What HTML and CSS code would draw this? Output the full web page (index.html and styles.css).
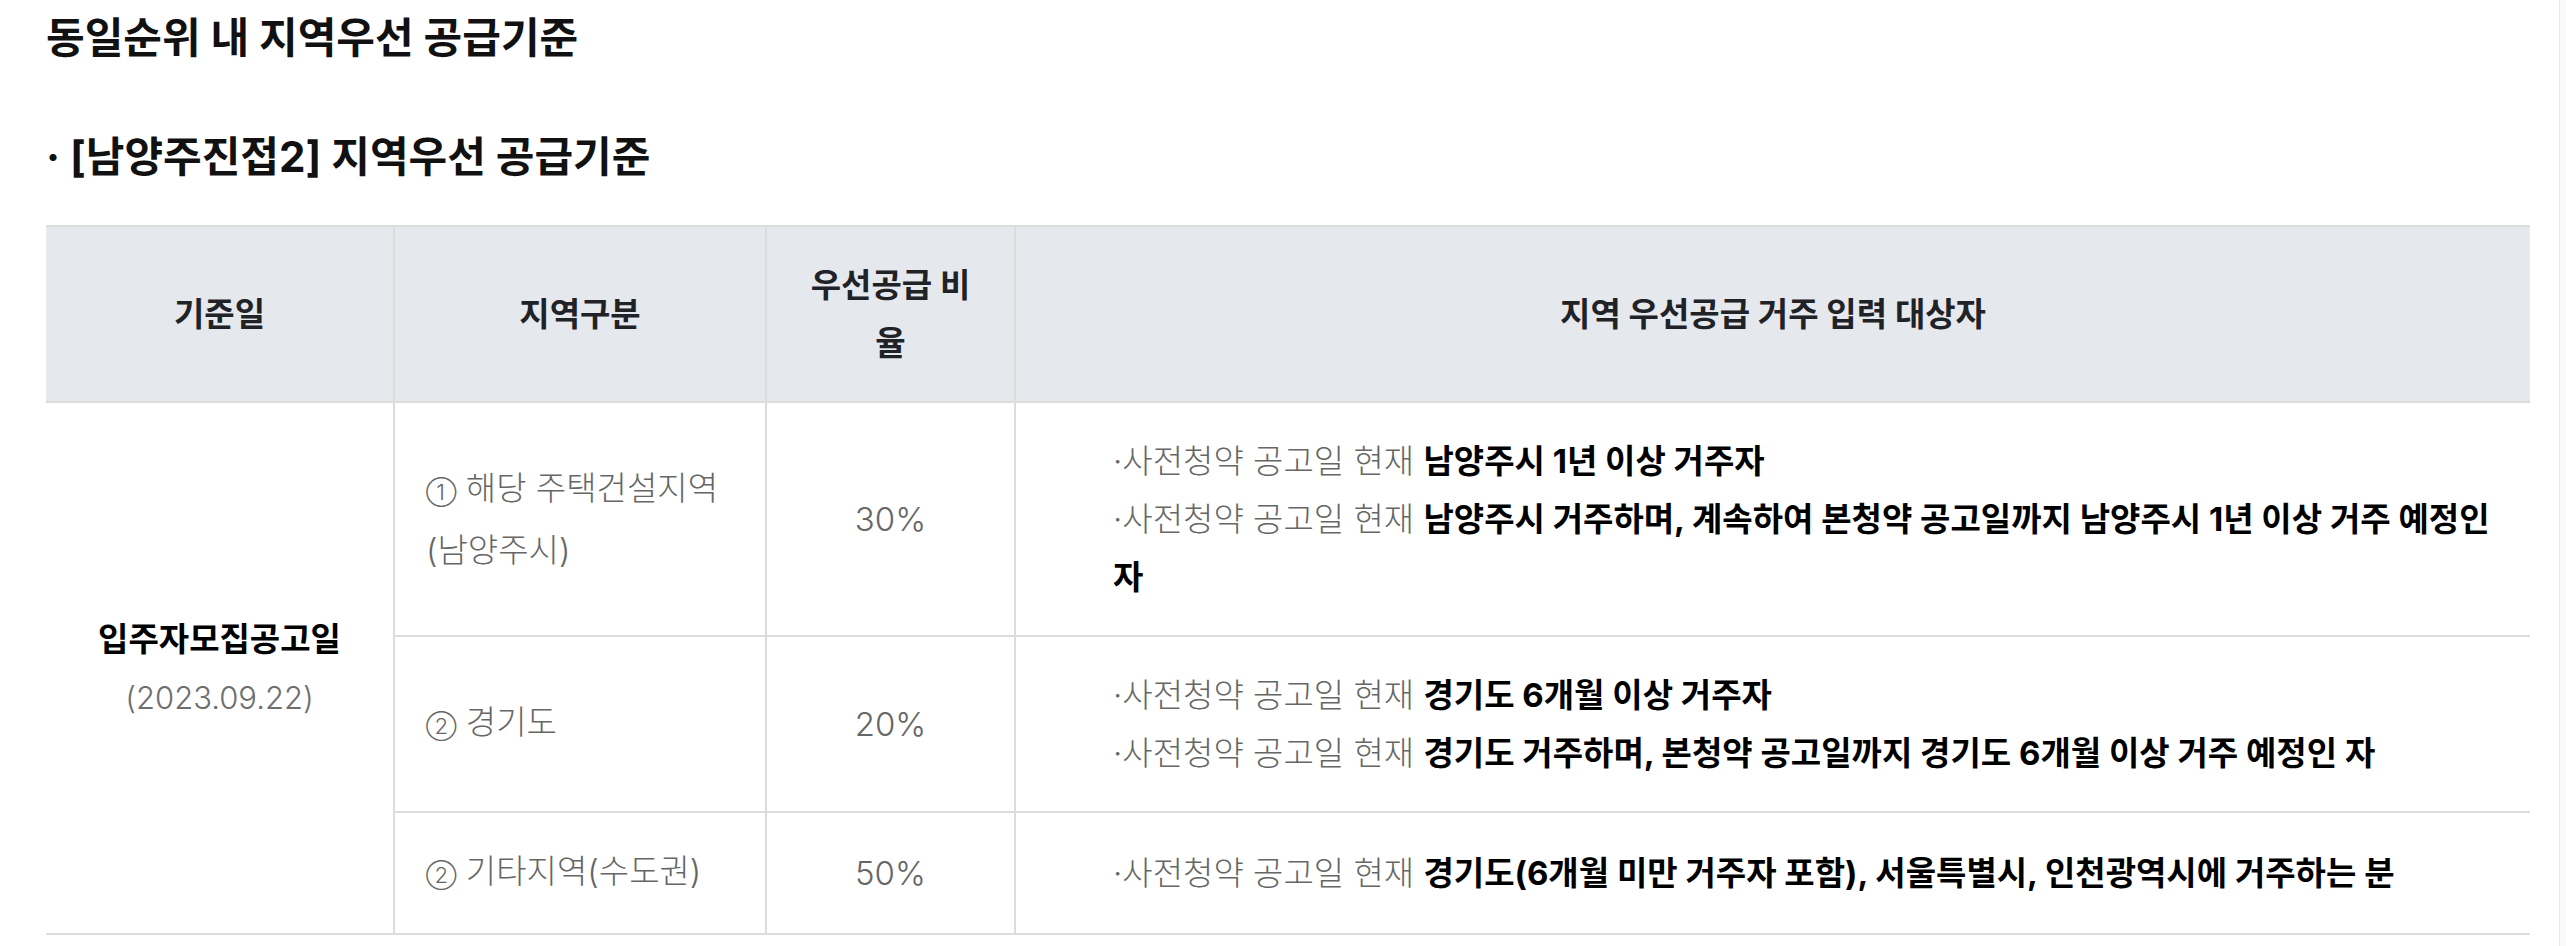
FILE: index.html
```html
<!DOCTYPE html>
<html lang="ko">
<head>
<meta charset="utf-8">
<link rel="stylesheet" href="styles.css">
</head>
<body>
<div class="page">
  <h2 class="title">동일순위 내 지역우선 공급기준</h2>
  <h3 class="subtitle">· [남양주진접2] 지역우선 공급기준</h3>
  <table class="tbl">
    <colgroup>
      <col class="c1"><col class="c2"><col class="c3"><col class="c4">
    </colgroup>
    <thead>
      <tr>
        <th>기준일</th>
        <th>지역구분</th>
        <th>우선공급 비율</th>
        <th>지역 우선공급 거주 입력 대상자</th>
      </tr>
    </thead>
    <tbody>
      <tr>
        <td rowspan="3" class="date"><strong>입주자모집공고일</strong><br><span class="gray">(2023.09.22)</span></td>
        <td class="region"><span class="num">①</span> 해당 주택건설지역 (남양주시)</td>
        <td class="ratio">30%</td>
        <td class="desc">·사전청약 공고일 현재 <b>남양주시 1년 이상 거주자</b><br>·사전청약 공고일 현재 <b>남양주시 거주하며, 계속하여 본청약 공고일까지 남양주시 1년 이상 거주 예정인 자</b></td>
      </tr>
      <tr>
        <td class="region"><span class="num">②</span> 경기도</td>
        <td class="ratio">20%</td>
        <td class="desc">·사전청약 공고일 현재 <b>경기도 6개월 이상 거주자</b><br>·사전청약 공고일 현재 <b>경기도 거주하며, 본청약 공고일까지 경기도 6개월 이상 거주 예정인 자</b></td>
      </tr>
      <tr>
        <td class="region"><span class="num">②</span> 기타지역(수도권)</td>
        <td class="ratio">50%</td>
        <td class="desc">·사전청약 공고일 현재 <b>경기도(6개월 미만 거주자 포함), 서울특별시, 인천광역시에 거주하는 분</b></td>
      </tr>
    </tbody>
  </table>
</div>
<div class="scroll-edge"></div>
</body>
</html>
```

FILE: styles.css
```css
html, body {
  margin: 0;
  padding: 0;
  background: #fff;
}
body {
  font-family: "Inter", "Noto Sans CJK KR", sans-serif;
  color: #111;
}
.page {
  padding: 8px 36px 0 46px;
}
.title {
  margin: 0;
  font-size: 42px;
  line-height: 60px;
  font-weight: 700;
  color: #111;
}
.subtitle {
  margin: 59px 0 38px;
  font-size: 42px;
  line-height: 60px;
  font-weight: 700;
  color: #111;
}
.tbl {
  width: 2484px;
  border-collapse: collapse;
  table-layout: fixed;
  font-size: 33px;
  line-height: 58px;
}
.c1 { width: 348px; }
.c2 { width: 372px; }
.c3 { width: 249px; }
.c4 { width: 1515px; }
.tbl th {
  background: #e5e8ed;
  color: #1f2226;
  font-weight: 700;
  padding: 29px 32px;
  border: 2px solid #dcdcdc;
  text-align: center;
  vertical-align: middle;
}
.tbl thead th:first-child { border-left: none; }
.tbl thead th:last-child { border-right: none; }
.tbl td {
  padding: 29px 31px;
  border: 2px solid #dcdcdc;
  vertical-align: middle;
  color: #666;
  font-weight: 300;
}
.tbl td:last-child { border-right: none; }
.tbl td.date {
  border-left: none;
  text-align: center;
}
.tbl td.date strong {
  color: #000;
  font-weight: 700;
}
.gray {
  color: #6e6e6e;
  font-size: 31px;
}
.num {
  font-size: 22px;
}
.tbl td.ratio { text-align: center; }
.tbl td.desc {
  padding: 29px 28px 29px 97px;
}
.tbl td.desc b {
  color: #000;
  font-weight: 700;
}
.scroll-edge {
  position: fixed;
  top: 0;
  right: 0;
  width: 6px;
  height: 100%;
  background: #fafafa;
  border-left: 1px solid #e6e6e6;
}
```
